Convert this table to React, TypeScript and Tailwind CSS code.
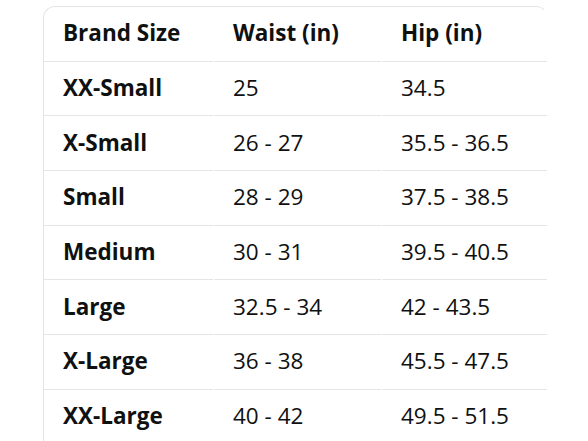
const rows = [
  ["XX-Small", "25", "34.5"],
  ["X-Small", "26 - 27", "35.5 - 36.5"],
  ["Small", "28 - 29", "37.5 - 38.5"],
  ["Medium", "30 - 31", "39.5 - 40.5"],
  ["Large", "32.5 - 34", "42 - 43.5"],
  ["X-Large", "36 - 38", "45.5 - 47.5"],
  ["XX-Large", "40 - 42", "49.5 - 51.5"],
];

const Cell = ({ children, bold }: { children: React.ReactNode; bold?: boolean }) => (
  <div
    className={
      "flex h-[54.67px] items-center border-b border-[#e3e6e6] pb-[1px] pl-[19px] text-[22.5px] text-[#0f1111] " +
      (bold ? "font-bold" : "font-normal")
    }
  >
    {children}
  </div>
);

export default function App() {
  return (
    <div className="h-[441px] w-[588px] overflow-hidden bg-white font-['Open_Sans',sans-serif]">
      <div className="ml-[43px] mt-[6px] w-[505px] overflow-hidden rounded-tl-[12px] rounded-tr-[12px] border-l border-r border-t border-[#e3e6e6] border-r-transparent">
        <div className="grid w-[504px] grid-cols-[169px_167px_167px] gap-x-[1px]">
          <Cell bold>Brand Size</Cell>
          <Cell bold>Waist (in)</Cell>
          <Cell bold>Hip (in)</Cell>
          {rows.map((r) => (
            <>
              <Cell bold>{r[0]}</Cell>
              <Cell>{r[1]}</Cell>
              <Cell>{r[2]}</Cell>
            </>
          ))}
        </div>
      </div>
    </div>
  );
}
